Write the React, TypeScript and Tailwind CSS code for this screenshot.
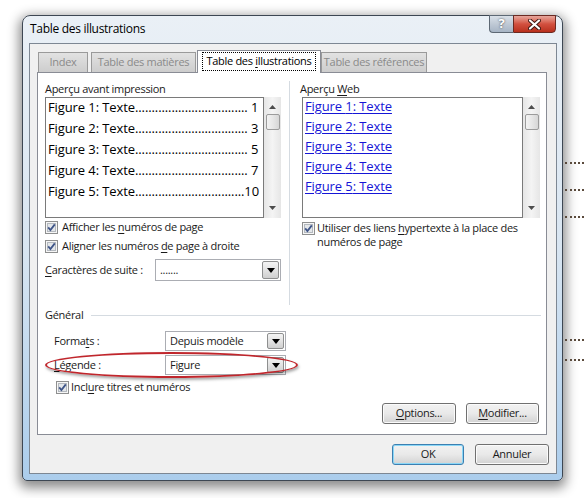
import { ReactNode } from 'react';

const Check = () => (
  <svg width="13" height="13" viewBox="0 0 13 13" className="shrink-0">
    <rect x="0.5" y="0.5" width="12" height="12" fill="#f6f6f6" stroke="#8e8f8f" />
    <rect x="2.5" y="2.5" width="8" height="8" fill="#e4e7ea" stroke="#b4b9bf" />
    <path d="M3.2 6.4 L5.4 9 L9.8 3.4" stroke="#3f5588" strokeWidth="1.8" fill="none" />
  </svg>
);

const Arrow = ({ up = false }: { up?: boolean }) => (
  <svg width="7" height="4" viewBox="0 0 7 4">
    <path d={up ? 'M0 4 L3.5 0 L7 4 Z' : 'M0 0 L3.5 4 L7 0 Z'} fill="#4d4d4d" />
  </svg>
);

const Scrollbar = () => (
  <div className="w-[17px] h-[121px] flex flex-col items-center bg-gradient-to-r from-[#e6e6e6] via-[#f4f4f4] to-[#e6e6e6]">
    <div className="h-[17px] flex items-center justify-center pt-[2px]">
      <Arrow up />
    </div>
    <div className="w-[14px] h-[16px] rounded-[2px] border border-[#9b9b9b] bg-gradient-to-r from-[#f3f3f3] via-[#e6e6e6] to-[#d6d6d6]" />
    <div className="flex-1" />
    <div className="h-[17px] flex items-center justify-center pb-[3px]">
      <Arrow />
    </div>
  </div>
);

const Combo = ({ value, width }: { value: string; width: string }) => (
  <div className={`flex h-full ${width} border border-[#abadb3] bg-white`}>
    <span className="flex-1 pl-[4px] flex items-center">{value}</span>
    <div className="w-[17px] m-[1px] border border-[#8e8f8f] rounded-[2px] bg-gradient-to-b from-[#f3f3f3] via-[#e3e3e3] to-[#cfcfcf] flex items-center justify-center">
      <svg width="8" height="5" viewBox="0 0 8 5">
        <path d="M0 0 L4 5 L8 0 Z" fill="#000" />
      </svg>
    </div>
  </div>
);

const Button = ({ children, width, def = false }: { children: ReactNode; width: string; def?: boolean }) => (
  <div
    className={`${width} h-[21px] rounded-[3px] border flex items-center justify-center bg-gradient-to-b from-[#f2f2f2] via-[#e9e9e9] to-[#d2d2d2] ${
      def ? 'border-[#3c7fb1] shadow-[inset_0_0_0_1px_#8ad7f7]' : 'border-[#707070] shadow-[inset_0_0_0_1px_#fbfbfb]'
    }`}
  >
    <span>{children}</span>
  </div>
);

const U = ({ children }: { children: ReactNode }) => <span className="underline underline-offset-2">{children}</span>;

// printed preview lines, dot leaders sized to the list width
const entries = [
  { label: 'Figure 1: Texte', dots: '.................................. ', page: '1' },
  { label: 'Figure 2: Texte', dots: '.................................. ', page: '3' },
  { label: 'Figure 3: Texte', dots: '.................................. ', page: '5' },
  { label: 'Figure 4: Texte', dots: '.................................. ', page: '7' },
  { label: 'Figure 5: Texte', dots: '.................................', page: '10' },
];

const Dots = ({ mt }: { mt: string }) => (
  <div className={`${mt} h-0 border-t-2 border-dotted border-[#5a4a3c] w-[19px]`} />
);

export default function App() {
  const figures = [1, 2, 3, 4, 5];

  return (
    <div className="w-[584px] h-[498px] bg-white flex pl-[22px] pt-[15px] overflow-hidden font-['Open_Sans',sans-serif] text-[11px] tracking-[-0.3px] text-[#1a1a1a]">
      <div className="w-[541px] h-[466px] shrink-0 flex flex-col border border-[#3d4753] rounded-t-[8px] rounded-b-[5px] bg-gradient-to-b from-[#eaf0f6] via-[#d8e5f1] to-[#abcdec] shadow-[0_4px_12px_3px_rgba(0,0,0,0.45)]">
        {/* title bar */}
        <div className="h-[27px] flex items-start pl-[7px] pr-[6px]">
          <span className="mt-[6px] text-[12px] leading-[14px] text-black">Table des illustrations</span>
          <div className="ml-auto flex -mt-[1px]">
            <div className="w-[24px] h-[18px] border border-[#5d6874] border-r-0 rounded-bl-[4px] bg-gradient-to-b from-[#d9e0e8] via-[#bfc9d5] to-[#a7b5c5] flex items-center justify-center text-white font-bold text-[13px] [text-shadow:0_0_2px_#333]">
              ?
            </div>
            <div className="w-[43px] h-[18px] border border-[#6b2a22] rounded-br-[4px] bg-gradient-to-b from-[#e6a69c] via-[#d2503f] to-[#b8301d] flex items-center justify-center">
              <svg width="13" height="11" viewBox="0 0 13 11">
                <path d="M2 1.5 L11 9.5 M11 1.5 L2 9.5" stroke="#3c1510" strokeWidth="4" strokeLinecap="round" />
                <path d="M2 1.5 L11 9.5 M11 1.5 L2 9.5" stroke="#fff" strokeWidth="2.2" strokeLinecap="round" />
              </svg>
            </div>
          </div>
        </div>

        {/* client area */}
        <div className="ml-[6px] mr-[5px] mb-[6px] flex-1 bg-[#f0f0f0] border border-[#7d8793] flex flex-col pt-[6px] pl-[7px] pr-[7px]">
          {/* tabs */}
          <div className="flex items-end h-[22px] pl-[1px] relative z-10">
            <div className="w-[50px] h-[20px] border border-[#9a9a9a] border-b-0 bg-gradient-to-b from-[#e2e2e2] to-[#cdcdcd] flex items-center justify-center text-[#8a8a8a]">
              Index
            </div>
            <div className="ml-[3px] w-[105px] h-[20px] border border-[#9a9a9a] border-b-0 bg-gradient-to-b from-[#e2e2e2] to-[#cdcdcd] flex items-center justify-center text-[#8a8a8a]">
              Table des matières
            </div>
            <div className="ml-[1px] w-[124px] h-[23px] -mb-[1px] border border-[#898c95] border-b-0 bg-white flex items-start justify-center pt-[1px]">
              <div className="border border-dotted border-black h-[19px] w-[114px] flex items-center justify-center text-black">
                <span>
                  Table des <U>i</U>llustrations
                </span>
              </div>
            </div>
            <div className="w-[106px] h-[20px] border border-[#9a9a9a] border-b-0 bg-gradient-to-b from-[#e2e2e2] to-[#cdcdcd] flex items-center justify-center text-[#8a8a8a]">
              Table des références
            </div>
          </div>

          {/* panel */}
          <div className="w-[510px] h-[363px] shrink-0 border border-[#898c95] bg-white flex flex-col pl-[7px] pr-[6px] pt-[8px]">
            <div className="h-[224px] flex">
              {/* left column */}
              <div className="w-[236px] flex flex-col">
                <div className="h-[15px] leading-[15px]">Aperçu avant impression</div>
                <div className="mt-[1px] flex">
                  <div className="w-[219px] h-[121px] border border-[#7a7a7a] pl-[2px] pr-[5px] overflow-hidden font-['Open_Sans',sans-serif] text-[13px] tracking-[-0.1px] leading-[21px] text-black">
                    <div className="-mt-[1px]">
                      {entries.map((e) => (
                        <div key={e.label} className="flex justify-between whitespace-pre">
                          <span>
                            {e.label}
                            {e.dots}
                          </span>
                          <span>{e.page}</span>
                        </div>
                      ))}
                    </div>
                  </div>
                  <Scrollbar />
                </div>
                <div className="h-[19px] flex items-center gap-[4px]">
                  <Check />
                  <span>
                    Afficher les <U>n</U>uméros de page
                  </span>
                </div>
                <div className="h-[19px] flex items-center gap-[4px]">
                  <Check />
                  <span>
                    Aligner les numéros <U>d</U>e page à droite
                  </span>
                </div>
                <div className="mt-[3px] h-[22px] flex items-center">
                  <span className="w-[110px]">
                    <U>C</U>aractères de suite :
                  </span>
                  <Combo value="......." width="w-[126px]" />
                </div>
              </div>

              <div className="ml-[8px] w-px bg-[#d5dbe1]" />

              {/* right column */}
              <div className="ml-[10px] w-[240px] flex flex-col">
                <div className="h-[15px] leading-[15px]">
                  Aperçu <U>W</U>eb
                </div>
                <div className="mt-[1px] ml-[2px] flex">
                  <div className="w-[221px] h-[121px] border border-[#7a7a7a] pl-[2px] overflow-hidden font-['Open_Sans',sans-serif] text-[13px] tracking-[-0.1px] leading-[20px] text-[#1515d6]">
                    <div className="-mt-[2px]">
                      {figures.map((n) => (
                        <div key={n}>
                          <span className="underline underline-offset-2">Figure {n}: Texte</span>
                        </div>
                      ))}
                    </div>
                  </div>
                  <Scrollbar />
                </div>
                <div className="mt-[3px] ml-[2px] flex items-start gap-[2px] leading-[14px]">
                  <div className="pt-[1px]">
                    <Check />
                  </div>
                  <span>
                    Utiliser des liens <U>h</U>ypertexte à la place des
                    <br />
                    numéros de page
                  </span>
                </div>
              </div>
            </div>

            {/* Général */}
            <div className="mt-[3px] h-[15px] flex items-center">
              <span>Général</span>
              <div className="ml-[8px] -mr-[1px] flex-1 h-px bg-[#d5dbe1]" />
            </div>

            <div className="mt-[8px] h-[20px] flex items-center pl-[9px]">
              <span className="w-[111px]">
                Forma<U>t</U>s :
              </span>
              <Combo value="Depuis modèle" width="w-[121px]" />
            </div>

            <div className="mt-[4px] h-[20px] flex items-center pl-[9px] relative">
              <span className="w-[111px]">
                <U>L</U>égende :
              </span>
              <Combo value="Figure" width="w-[121px]" />
              <div className="absolute left-0 -top-[3px] w-[253px] h-[26px] rounded-[50%] border-2 border-[#c0262c] shadow-[1px_2px_3px_rgba(0,0,0,0.35)]" />
            </div>

            <div className="mt-[5px] h-[15px] flex items-center pl-[11px] gap-[2px]">
              <Check />
              <span>
                Incl<U>u</U>re titres et numéros
              </span>
            </div>

            <div className="mt-[8px] flex justify-end gap-[10px] pr-[1px]">
              <Button width="w-[74px]">
                <U>O</U>ptions...
              </Button>
              <Button width="w-[73px]">
                <U>M</U>odifier...
              </Button>
            </div>
          </div>

          {/* dialog buttons */}
          <div className="mt-[9px] flex justify-end gap-[11px]">
            <Button width="w-[72px]" def>
              OK
            </Button>
            <Button width="w-[74px]">Annuler</Button>
          </div>
        </div>
      </div>

      {/* dotted leaders behind the dialog */}
      <div className="ml-[2px] flex flex-col">
        <Dots mt="mt-[147px]" />
        <Dots mt="mt-[25px]" />
        <Dots mt="mt-[25px]" />
        <Dots mt="mt-[121px]" />
        <Dots mt="mt-[18px]" />
      </div>
    </div>
  );
}
